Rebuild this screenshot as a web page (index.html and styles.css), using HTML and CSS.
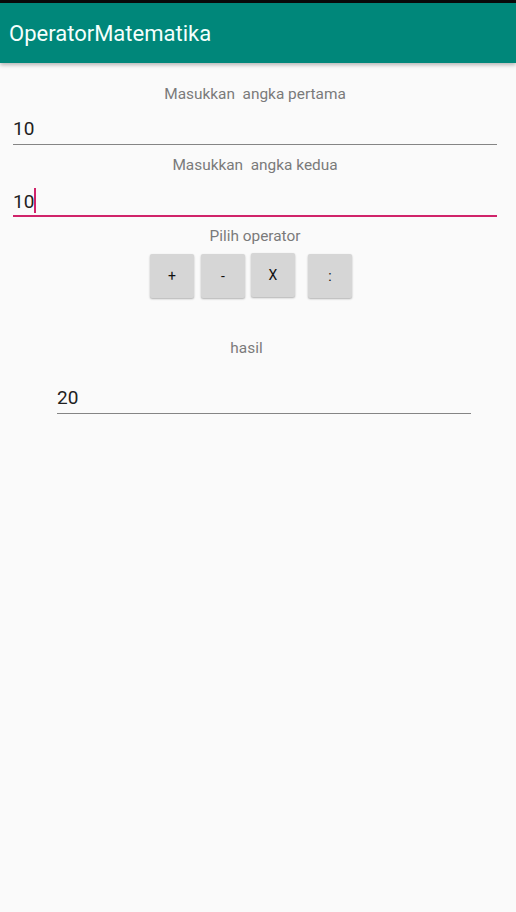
FILE: index.html
```html
<!DOCTYPE html>
<html>
<head>
<meta charset="utf-8">
<link rel="stylesheet" href="styles.css">
</head>
<body>
<div class="status"></div>
<header class="toolbar"><h1 class="title">OperatorMatematika</h1></header>
<main class="content">
  <div class="label label-first">Masukkan  angka pertama</div>
  <div class="field field-first">10</div>
  <div class="label label-second">Masukkan  angka kedua</div>
  <div class="field field-focused">10<span class="cursor"></span></div>
  <div class="label label-op">Pilih operator</div>
  <div class="buttons">
    <button class="btn">+</button>
    <button class="btn">-</button>
    <button class="btn btn-raised">x</button>
    <button class="btn btn-far">:</button>
  </div>
  <div class="label label-result">hasil</div>
  <div class="field field-result">20</div>
</main>
</body>
</html>
```
FILE: styles.css
```css
html, body {
  margin: 0;
  padding: 0;
  background: #fafafa;
  font-family: Roboto, "Noto Sans", sans-serif;
}
.status {
  height: 3px;
  background: #0a0a0a;
}
.toolbar {
  height: 60px;
  background: #00877a;
  box-shadow: 0 2px 4px rgba(0,0,0,0.28);
  display: flex;
  align-items: center;
  padding-left: 9px;
  position: relative;
}
.title {
  margin: 0;
  font-size: 22px;
  font-weight: 400;
  color: #f4fffd;
  line-height: 26px;
  margin-top: 1px;
}
.content {
  padding: 0 19px 0 13px;
}
.label {
  font-size: 15.4px;
  line-height: 18px;
  color: #7a7a7a;
  text-align: center;
  white-space: pre;
}
.label-first { margin-top: 21.6px; }
.label-second { margin-top: 11px; }
.label-op { margin-top: 10px; }
.label-result { margin-top: 40.5px; padding-right: 17px; }
.field {
  font-size: 19px;
  line-height: 24px;
  color: #212121;
  border-bottom: 1px solid #858585;
  padding-bottom: 3px;
  margin-top: 14.6px;
}
.field-focused {
  border-bottom: 2px solid #d0236a;
  padding-bottom: 1.5px;
  margin-top: 13.6px;
}
.cursor {
  display: inline-block;
  width: 2px;
  height: 25px;
  background: #d0236a;
  vertical-align: -5px;
  margin-left: 0;
}
.field-result {
  margin-top: 29.5px;
  margin-left: 44px;
  margin-right: 26px;
  padding-bottom: 2.5px;
}
.buttons {
  display: flex;
  align-items: flex-start;
  margin-top: 9px;
  padding-left: 137px;
  gap: 7px;
}
.btn {
  width: 44px;
  height: 44px;
  border: none;
  border-radius: 2px;
  background: #d6d6d6;
  box-shadow: 0 1px 2px rgba(0,0,0,0.3);
  font-family: Roboto, sans-serif;
  font-size: 14px;
  font-weight: 400;
  color: #111;
  text-transform: uppercase;
  padding: 0;
}
.btn-raised { margin-top: -1px; margin-left: -1px; }
.btn-far { margin-left: 6px; }
```
